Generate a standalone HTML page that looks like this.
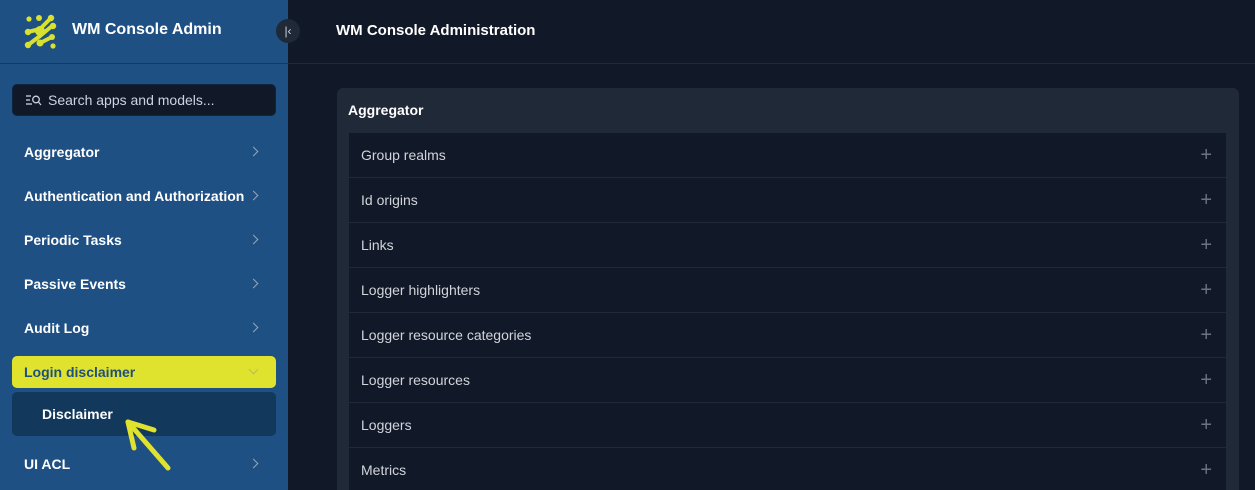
<!DOCTYPE html>
<html><head><style>
*{box-sizing:border-box;margin:0;padding:0}
html,body{width:1255px;height:490px;overflow:hidden}
body{background:#111827;font-family:"Liberation Sans",sans-serif;position:relative}
.sb{position:absolute;left:0;top:0;width:288px;height:490px;background:#1e5083}
.hdr{position:absolute;left:0;top:0;width:288px;height:64px;border-bottom:1px solid #163a5f}
.brand{position:absolute;left:72px;top:21px;color:#fff;font-weight:bold;font-size:16px}
.coll{position:absolute;left:276px;top:19px;width:24px;height:24px;border-radius:50%;background:#1f2937;color:#d1d5db;font-size:12px;text-align:center;line-height:24px;z-index:2}
.search{position:absolute;left:12px;top:84px;width:264px;height:32px;background:#111827;border:1px solid #0d2440;border-radius:5px;color:#cbd5e1;font-size:14px;line-height:30px;padding-left:35px}
.item{position:absolute;left:24px;color:#fff;font-weight:bold;font-size:14px}
.chev{position:absolute;left:250px;width:7px;height:7px;border-right:1.5px solid #94a3b8;border-top:1.5px solid #94a3b8;transform:rotate(45deg)}
.main-h{position:absolute;left:288px;top:0;right:0;height:64px;border-bottom:1px solid #1f2937}
.mt{position:absolute;left:336px;top:22px;color:#fff;font-weight:bold;font-size:15px}
.panel{position:absolute;left:337px;top:88px;width:902px;height:420px;background:#1f2937;border-radius:6px}
.pt{position:absolute;left:348px;top:102px;color:#fff;font-weight:bold;font-size:14px}
.row{position:absolute;left:349px;width:877px;height:44px;background:#111827;color:#d1d5db;font-size:14px;line-height:44px;padding-left:12px}
.row:after{content:"+";position:absolute;right:14px;top:0;color:#6b7280;font-size:20px;font-weight:300}
</style></head><body>
<div class="sb">
<div class="hdr"></div>
<svg style="position:absolute;left:20px;top:12px" width="40" height="40" viewBox="0 0 40 40">
<g stroke="#d9e12f" stroke-width="4" stroke-linecap="round" fill="none">
<line x1="8" y1="20" x2="20" y2="17"/><line x1="20" y1="17" x2="31" y2="6"/>
<line x1="8" y1="33" x2="20" y2="24"/><line x1="20" y1="24" x2="32" y2="14"/>
<line x1="20" y1="31" x2="32" y2="25"/>
</g>
<g fill="#d9e12f">
<circle cx="9" cy="7" r="2.6"/><circle cx="19" cy="6" r="3"/><circle cx="31" cy="6" r="3.2"/>
<circle cx="8" cy="20" r="3.2"/><circle cx="20" cy="19" r="5"/><circle cx="33" cy="14" r="3.2"/>
<circle cx="8" cy="33" r="3.2"/><circle cx="20" cy="31" r="3.5"/><circle cx="32" cy="25" r="3"/><circle cx="33" cy="34" r="2.6"/>
</g></svg>
<div class="brand">WM Console Admin</div>
<div class="search"><svg style="position:absolute;left:13px;top:9px" width="16" height="12" viewBox="0 0 16 12"><g stroke="#cbd5e1" stroke-width="1.3" fill="none"><line x1="0" y1="2" x2="5" y2="2"/><line x1="0" y1="6" x2="4" y2="6"/><line x1="0" y1="10" x2="6" y2="10"/><circle cx="10" cy="5.5" r="3.3"/><line x1="12.4" y1="8" x2="15" y2="11"/></g></svg>Search apps and models...</div>
<div class="item" style="top:144px">Aggregator</div><div class="chev" style="top:148px"></div>
<div class="item" style="top:188px">Authentication and Authorization</div><div class="chev" style="top:192px"></div>
<div class="item" style="top:232px">Periodic Tasks</div><div class="chev" style="top:236px"></div>
<div class="item" style="top:276px">Passive Events</div><div class="chev" style="top:280px"></div>
<div class="item" style="top:320px">Audit Log</div><div class="chev" style="top:324px"></div>
<div style="position:absolute;left:12px;top:356px;width:264px;height:32px;background:#dfe32e;border-radius:5px"></div>
<div class="item" style="top:364px;color:#1e4f80">Login disclaimer</div>
<div class="chev" style="top:366px;transform:rotate(135deg);border-color:#b8bd5a"></div>
<div style="position:absolute;left:12px;top:392px;width:264px;height:44px;background:#12385b;border-radius:5px"></div>
<div class="item" style="top:406px;left:42px">Disclaimer</div>
<svg style="position:absolute;left:122px;top:418px" width="52" height="56" viewBox="0 0 52 56"><g stroke="#dfe32e" stroke-width="5" stroke-linecap="round" fill="none"><line x1="6" y1="4" x2="46" y2="50"/><line x1="6" y1="4" x2="32" y2="12"/><line x1="6" y1="4" x2="12" y2="30"/></g></svg>
<div class="item" style="top:456px">UI ACL</div><div class="chev" style="top:460px"></div>
</div>
<div class="coll">|‹</div>
<div class="main-h"></div>
<div class="mt">WM Console Administration</div>
<div class="panel"></div>
<div class="pt">Aggregator</div>
<div class="row" style="top:133px">Group realms</div>
<div class="row" style="top:178px">Id origins</div>
<div class="row" style="top:223px">Links</div>
<div class="row" style="top:268px">Logger highlighters</div>
<div class="row" style="top:313px">Logger resource categories</div>
<div class="row" style="top:358px">Logger resources</div>
<div class="row" style="top:403px">Loggers</div>
<div class="row" style="top:448px">Metrics</div>
</body></html>
